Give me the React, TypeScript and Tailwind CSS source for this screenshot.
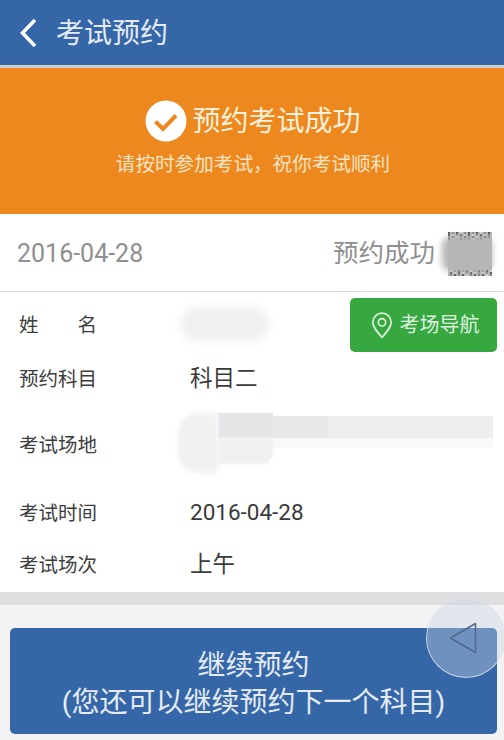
const FONT = "font-['Roboto','Noto_Sans_CJK_SC',sans-serif]";

type InfoRow = {
  label: string;
  value?: string;
  height: string;
};

// speckled strips for the scrubbed-out stamp, same dots every render
const NOISE = Array.from({ length: 150 }, (_, i) => {
  const seed = (i * 7919 + 13) % 101;
  const x = (i * 2) % 44;
  const band = i % 2 === 0 ? Math.floor(i / 44) * 2 : 38 + Math.floor(i / 44) * 2;
  return { x, y: band, shade: seed % 3 === 0 ? "#555" : seed % 3 === 1 ? "#8a8a8a" : "#d8d8d8" };
});

function Row({ label, value, height, children }: InfoRow & { children?: React.ReactNode }) {
  return (
    <div className={`flex items-center ${height}`}>
      <div className="w-[171px] shrink-0 pl-[19px] pt-[3px] text-[19.500px] leading-none text-[#3d3d3d]">{label}</div>
      {value && <div className="pl-[19px] pt-[1px] text-[22.500px] leading-none text-[#3a3a3a]">{value}</div>}
      {children}
    </div>
  );
}

export default function App() {
  return (
    <div className={`relative flex h-[740px] w-[504px] flex-col overflow-hidden bg-[#f3f3f5] ${FONT}`}>
      {/* Title bar */}
      <div className="flex h-[65px] items-center bg-[#3566a8] pl-[19px] text-white">
        <svg viewBox="0 0 18 30" className="h-[30px] w-[18px]" fill="none" aria-hidden="true">
          <path d="M16 2 3.500 15 16 28" stroke="currentColor" strokeWidth="3.600" />
        </svg>
        <span className="ml-[19px] pt-[3px] text-[28px] leading-none text-[#e4ebf4]">考试预约</span>
      </div>
      <div className="h-[3px] bg-[#c9cdd2]" />

      {/* Success banner */}
      <div className="flex h-[146px] flex-col items-center bg-[#ec881d] pt-[32px] text-white">
        <div className="flex items-center pl-[2px]">
          <svg viewBox="0 0 42 42" className="h-[42px] w-[42px]" aria-hidden="true">
            <circle cx="21" cy="21" r="20.500" fill="#fff" />
            <path d="M10.500 21.500 18 29 31 15.500" fill="none" stroke="#ec881d" strokeWidth="4" />
          </svg>
          <span className="ml-[5px] pt-[2px] text-[28px] leading-none text-[#fdf0dc]">预约考试成功</span>
        </div>
        <div className="mt-[13px] pl-[2px] text-[19.600px] leading-none text-[#fbe3c4]">
          请按时参加考试，祝你考试顺利
        </div>
      </div>

      {/* Date and status */}
      <div className="flex h-[78px] items-center justify-between border-b border-[#dcdcdc] bg-white pl-[17px] pr-[12px] pt-[2px]">
        <span className="text-[25px] leading-none text-[#8f8f8f]">2016-04-28</span>
        <div className="flex items-center">
          <span className="text-[25.500px] leading-none text-[#8f8f8f]">预约成功</span>
          <div className="relative ml-[7px] h-[44px] w-[50px]">
            <svg viewBox="0 0 44 44" className="ml-[6px] h-[44px] w-[44px]" aria-hidden="true">
              <rect width="44" height="44" fill="#b8b8b8" />
              {NOISE.map((dot, i) => (
                <rect key={i} x={dot.x} y={dot.y} width="2" height="2" fill={dot.shade} />
              ))}
            </svg>
            <div className="absolute left-0 top-[5px] h-[34px] w-[50px] rounded-lg bg-[#b6b6b6] blur-[3px]" />
          </div>
        </div>
      </div>

      {/* Details */}
      <div className="bg-white">
        <Row label="" height="h-[64px]">
          <div className="-ml-[171px] flex w-[171px] shrink-0 pl-[19px] pt-[3px]">
            <div className="flex w-[78px] justify-between text-[19.500px] leading-none text-[#3d3d3d]">
              <span>姓</span>
              <span>名</span>
            </div>
          </div>
          <div className="ml-[9px] h-[34px] w-[90px] rounded-full bg-[#f0f0f1] blur-[4px]" />
          <button
            type="button"
            className="ml-auto mr-[7px] mt-[2px] flex h-[54px] w-[147px] items-center justify-center rounded-[5px] bg-[#37a840] pl-[3px] text-[20px] text-[#dff3e0]"
          >
            <svg viewBox="0 0 24 30" className="mr-[7px] h-[29px] w-[22px]" fill="none" stroke="currentColor" strokeWidth="1.800" aria-hidden="true">
              <path d="M12 28C6 21 2 16.500 2 11.500a10 10 0 0 1 20 0C22 16.500 18 21 12 28Z" />
              <circle cx="12" cy="11.500" r="4" />
            </svg>
            考场导航
          </button>
        </Row>
        <Row label="预约科目" value="科目二" height="h-[44px]" />
        <Row label="考试场地" height="h-[88px]">
          {/* scrubbed address */}
          <div className="ml-[7px] flex h-[62px] w-[315px] items-start">
            <div className="h-[60px] w-[40px] rounded-l-[20px] bg-[#f1f0f3] blur-[2px]" />
            <div className="flex flex-col">
              <div className="flex h-[25px]">
                <div className="w-[55px] bg-[#e6e5e8]" />
                <div className="mt-[3px] w-[55px] bg-[#e8e7ea]" />
                <div className="mt-[3px] w-[165px] bg-[#eeedf0]" />
              </div>
              <div className="flex">
                <div className="h-[26px] w-[55px] rounded-br-xl bg-[#f0eff2] blur-[1px]" />
                <div className="h-[10px] w-[220px] bg-[#f9f9fa]" />
              </div>
            </div>
          </div>
        </Row>
        <Row label="考试时间" value="2016-04-28" height="h-[48px]" />
        <Row label="考试场次" value="上午" height="h-[56px]" />
      </div>

      <div className="h-[13px] bg-[#dfdfe2]" />

      {/* Continue */}
      <div className="pl-[10px] pr-[7px] pt-[23px]">
        <button
          type="button"
          className="flex h-[106px] w-full flex-col items-center justify-center rounded-[5px] bg-[#3566a8] pt-[6px] text-[28px] leading-[37px] text-[#e4ebf4]"
        >
          <span>继续预约</span>
          <span>(您还可以继续预约下一个科目)</span>
        </button>
      </div>

      {/* Floating assistive button */}
      <div className="absolute left-[426px] top-[598px] flex h-[80px] w-[80px] items-center justify-center rounded-full border border-[#e2e4e9]/80 bg-[#c8d2e2]/40">
        <svg viewBox="0 0 28 32" className="mr-[6px] h-[32px] w-[28px]" fill="none" aria-hidden="true">
          <path d="M26.500 1.500V30.500L1.500 16Z" stroke="#52688a" strokeWidth="1.500" strokeLinejoin="round" />
        </svg>
      </div>
    </div>
  );
}
